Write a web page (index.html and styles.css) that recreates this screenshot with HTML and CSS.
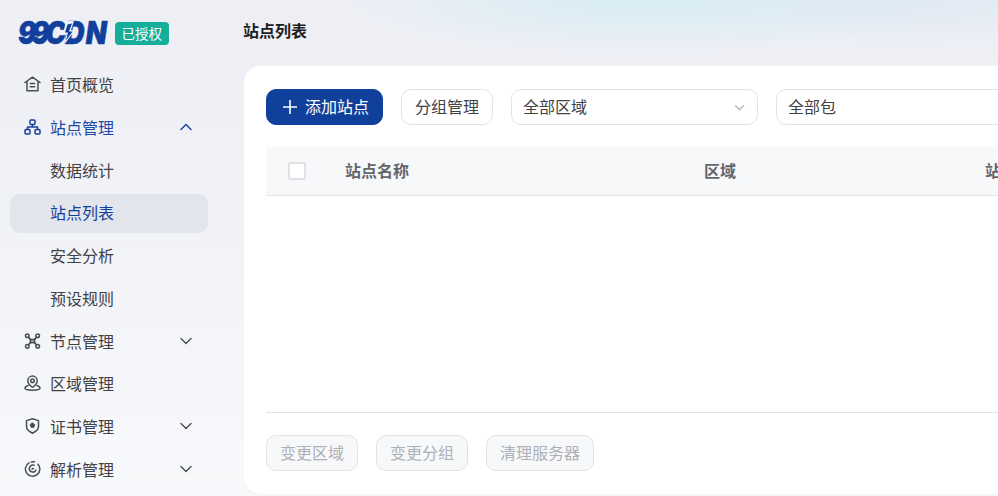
FILE: index.html
```html
<!DOCTYPE html>
<html lang="zh-CN">
<head>
<meta charset="utf-8">
<title>站点列表</title>
<link rel="stylesheet" href="styles.css">
</head>
<body>
<div class="app">
  <aside class="sidebar">
    <div class="brand">
      <svg class="logo" width="87" height="26" viewBox="0 0 87 26">
        <text transform="scale(.88 1)" x="-1 14 30 52 76" y="24" class="logo-text">99CDN</text>
        <path d="M47 1 L55 1 L52 10 L56 10 L45 25 L47.500 14 L44 14 Z" fill="#f0f0f6"/>
        <path d="M48.500 4.500 L53 3.500 L50 11.500 L53.500 11.500 L47 20.500 L49 12.500 L46 12.500 Z" fill="#11409c"/>
      </svg>
      <span class="badge">已授权</span>
    </div>
    <nav class="menu">
      <a class="item">
        <svg class="ico" viewBox="0 0 17 16"><path d="M1 6.500 8.500 1.200l7.500 5.300M3 5.500V14.800h11V5.500M6.300 7.500h4.400M6.300 10.800h4.400"/></svg>
        <span class="label">首页概览</span>
      </a>
      <a class="item open">
        <svg class="ico" viewBox="0 0 17 16"><rect x="6" y="1" width="5" height="4.500" rx="1"/><rect x="1" y="10.500" width="5" height="4.500" rx="1"/><rect x="11" y="10.500" width="5" height="4.500" rx="1"/><path d="M8.500 5.500V8M3.500 10.500V8h10v2.500"/></svg>
        <span class="label">站点管理</span>
        <svg class="chev" viewBox="0 0 12 8"><path d="M1 6.500 6 1.500l5 5"/></svg>
      </a>
      <a class="item sub">数据统计</a>
      <a class="item sub active">站点列表</a>
      <a class="item sub">安全分析</a>
      <a class="item sub">预设规则</a>
      <a class="item">
        <svg class="ico" viewBox="0 0 17 16"><circle cx="3.300" cy="2.800" r="1.800"/><circle cx="13.700" cy="2.800" r="1.800"/><circle cx="3.300" cy="13.200" r="1.800"/><circle cx="13.700" cy="13.200" r="1.800"/><path d="M6 6c1.600.8 3.400.8 5 0-.8 1.300-.8 2.700 0 4-1.600-.8-3.400-.8-5 0 .8-1.300.8-2.700 0-4Z"/><path d="M4.500 4 6 6M12.500 4 11 6M4.500 12 6 10M12.500 12 11 10"/></svg>
        <span class="label">节点管理</span>
        <svg class="chev" viewBox="0 0 12 8"><path d="M1 1.500 6 6.500l5-5"/></svg>
      </a>
      <a class="item">
        <svg class="ico" viewBox="0 0 17 16"><path d="M8.500 12.500C5.500 10.500 3.800 8.500 3.800 5.800a4.700 4.700 0 0 1 9.400 0c0 2.700-1.700 4.700-4.700 6.700Z"/><circle cx="8.500" cy="5.800" r="1.800"/><path d="M4 10.500C2 11.200 1 12 1 13c0 1.300 2.500 2.200 7.500 2.200S16 14.300 16 13c0-1-1-1.800-3-2.500"/></svg>
        <span class="label">区域管理</span>
      </a>
      <a class="item">
        <svg class="ico" viewBox="0 0 17 16"><path d="M2.500 2.600 8.500.8l6 1.800v6c0 3-2.500 5-6 6.600-3.500-1.600-6-3.600-6-6.600Z"/><path class="fill" d="M8.500 5 10.700 6.600 9.900 9.300H7.100L6.300 6.600Z"/></svg>
        <span class="label">证书管理</span>
        <svg class="chev" viewBox="0 0 12 8"><path d="M1 1.500 6 6.500l5-5"/></svg>
      </a>
      <a class="item">
        <svg class="ico" viewBox="0 0 17 16"><path d="M5 1.800A7.200 7.200 0 1 0 14 3.200"/><path d="M12 9a3.500 3.500 0 1 1-2-4.800M7.300 1 10.500 .8"/><path d="M8 8.200a1.200 1.200 0 0 1 1.500-.6"/></svg>
        <span class="label">解析管理</span>
        <svg class="chev" viewBox="0 0 12 8"><path d="M1 1.500 6 6.500l5-5"/></svg>
      </a>
    </nav>
  </aside>
  <main class="main">
    <h1 class="title">站点列表</h1>
    <section class="card">
      <div class="toolbar">
        <button class="btn primary">
          <svg class="plus" viewBox="0 0 14 14"><path d="M7 0v14M0 7h14"/></svg>添加站点
        </button>
        <button class="btn">分组管理</button>
        <div class="select">全部区域
          <svg class="select-chev" viewBox="0 0 12 8"><path d="M1 1.500 6 6.500l5-5"/></svg>
        </div>
        <div class="select">全部包</div>
      </div>
      <div class="thead">
        <span class="check"></span>
        <span class="col col-name">站点名称</span>
        <span class="col col-area">区域</span>
        <span class="col">站点状态</span>
      </div>
      <div class="tbody"></div>
      <div class="footer">
        <button class="btn disabled">变更区域</button>
        <button class="btn disabled">变更分组</button>
        <button class="btn disabled">清理服务器</button>
      </div>
    </section>
  </main>
</div>
</body>
</html>
```

FILE: styles.css
```css
* { box-sizing: border-box; }
html, body { margin: 0; height: 100%; overflow: hidden; }
body {
  font-family: "Noto Sans CJK SC", "Liberation Sans", sans-serif;
  font-size: 16px;
  color: #3f4247;
  background:
    radial-gradient(ellipse 300px 55px at 640px 0, #d6ecf3 0%, rgba(214,236,243,0) 100%),
    radial-gradient(ellipse 260px 50px at 900px 0, #dfe9f3 0%, rgba(223,233,243,0) 100%),
    linear-gradient(180deg, #eeeff5 0%, #f2f3f7 50%, #f8f9fb 100%);
}
.app { display: flex; width: 1300px; height: 496px; }

.sidebar { width: 244px; flex: none; padding: 20px 36px 0 10px; }
.brand { display: flex; align-items: center; gap: 9px; padding-left: 9px; height: 26px; }
.logo { display: block; flex: none; overflow: visible; }
.logo-text {
  font-family: "Inter", "Liberation Sans", sans-serif;
  font-weight: 900;
  font-style: italic;
  font-size: 31px;
  fill: #11409c;
  stroke: #11409c;
  stroke-width: .5px;
}
.badge {
  background: #14ae9a;
  color: #fff;
  font-size: 13.500px;
  line-height: 22px;
  height: 23px;
  padding: 0 6.500px;
  border-radius: 4px;
}

.menu { display: flex; flex-direction: column; gap: 3.750px; margin-top: 19.500px; }
.item {
  display: flex;
  align-items: center;
  height: 39px;
  padding: 0 0 2px 14px;
  border-radius: 10px;
  line-height: 24px;
  color: #3f4247;
}
.ico {
  width: 17px; height: 16px; flex: none;
  margin-right: 9px;
  fill: none;
  stroke: #4a4d52;
  stroke-width: 1.500;
  stroke-linejoin: round;
  stroke-linecap: round;
}
.ico .fill { fill: #4a4d52; stroke-width: 1; }
.label { flex: 1; }
.chev {
  width: 12px; height: 8px; flex: none;
  margin-right: 16px;
  fill: none;
  stroke: #4a4d52;
  stroke-width: 1.400;
  stroke-linecap: round;
  stroke-linejoin: round;
}
.item.open .label { color: #1a4aa5; }
.item.open .ico, .item.open .chev { stroke: #11409c; }
.item.sub { padding-left: 40px; }
.item.active { background: #e3e5ec; color: #11409c; }

.main { flex: 1; min-width: 0; display: flex; flex-direction: column; }
.title {
  margin: 0 0 0 -1px;
  height: 66px;
  font-size: 16px;
  font-weight: 700;
  line-height: 60px;
  color: #1c1e21;
}
.card {
  height: 428px;
  background: #fff;
  border-radius: 16px 0 0 16px;
  padding: 23px 22px 0;
  display: flex;
  flex-direction: column;
  box-shadow: 0 1px 2px rgba(40, 50, 80, .05);
}
.toolbar { display: flex; align-items: stretch; gap: 18px; height: 36px; }
.btn {
  font: inherit;
  height: 36px;
  padding: 0 13px 2px;
  background: #fff;
  color: #3f4247;
  border: 1px solid #e2e3e7;
  border-radius: 10px;
  line-height: 32px;
  white-space: nowrap;
}
.btn.primary {
  background: #11409c;
  border-color: #11409c;
  color: #fff;
  width: 117px;
  padding: 0 0 2px 3px;
  display: flex;
  align-items: center;
  justify-content: center;
}
.plus { width: 14px; height: 14px; margin: 2px 8px 0 0; stroke: #fff; stroke-width: 1.600; fill: none; }
.btn.disabled { background: #f7f8fa; color: #adb0b5; }
.select {
  position: relative;
  width: 247px;
  padding-left: 11px;
  border: 1px solid #e2e3e7;
  border-radius: 10px;
  line-height: 32px;
  background: #fff;
}
.select-chev {
  position: absolute;
  right: 12px; top: 14px;
  width: 11px; height: 7px;
  fill: none;
  stroke: #a9abb0;
  stroke-width: 1.200;
}
.thead {
  display: flex;
  align-items: center;
  height: 49px;
  margin-top: 22px;
  background: #f7f8fa;
  border-bottom: 1px solid #e2e3e7;
  padding: 0 0 0 22px;
  font-weight: 700;
  color: #63666b;
}
.check {
  width: 18px; height: 18px; flex: none;
  background: #fff;
  border: 2px solid #dfe1e5;
  border-radius: 2px;
  margin-right: 39px;
}
.col { flex: none; line-height: 24px; padding-bottom: 2px; }
.col-name { width: 359px; }
.col-area { width: 281px; }
.tbody { flex: none; height: 217px; border-bottom: 1px solid #e2e3e7; }
.footer { display: flex; gap: 18px; margin-top: 22px; }
```
